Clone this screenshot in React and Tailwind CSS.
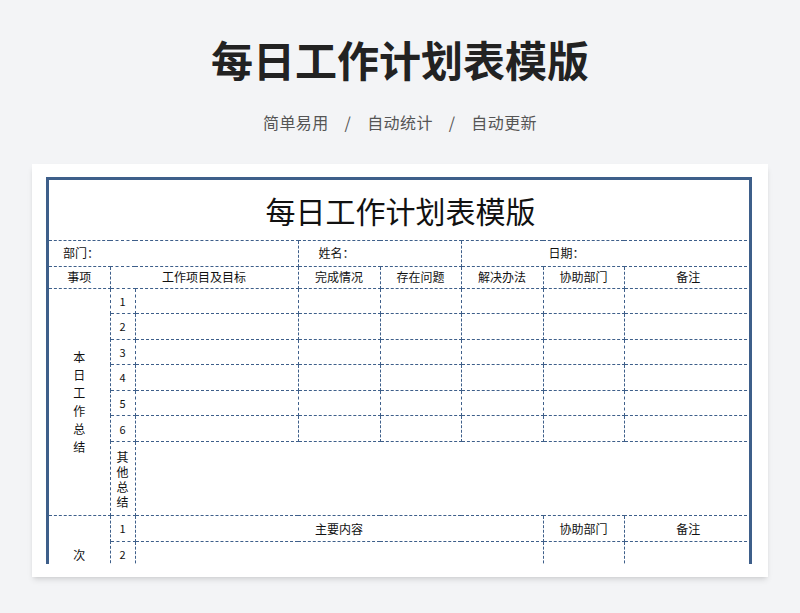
import React from 'react';

const font = { fontFamily: '"Noto Sans CJK SC", "Liberation Serif", serif' };
const b = 'border border-dashed border-[#3e5f8a]';

const App = () => {
  const rows = [1, 2, 3, 4, 5, 6];
  return (
    <div className="w-[800px] h-[613px] bg-[#f3f4f6] flex flex-col items-center overflow-hidden" style={font}>
      <h1 className="mt-[30px] text-[42px] leading-[58px] font-bold text-[#222]">每日工作计划表模版</h1>
      <p className="mt-[22px] text-[16px] text-[#555] tracking-wide">简单易用&nbsp;&nbsp;&nbsp;&nbsp;/&nbsp;&nbsp;&nbsp;&nbsp;自动统计&nbsp;&nbsp;&nbsp;&nbsp;/&nbsp;&nbsp;&nbsp;&nbsp;自动更新</p>
      <div className="mt-[30px] w-[736px] h-[413px] bg-white shadow-md pt-[13px] pl-[14px] pr-[16px] pb-[13px]">
        <div className="h-full overflow-hidden border-x-[3px] border-t-[3px] border-[#3e5f8a]">
          <table className="border-collapse table-fixed text-[12px] text-[#111] w-[703px]">
            <colgroup>
              <col className="w-[61px]" /><col className="w-[25px]" /><col className="w-[163px]" /><col className="w-[82px]" />
              <col className="w-[81px]" /><col className="w-[82px]" /><col className="w-[81px]" /><col className="w-[128px]" />
            </colgroup>
            <tbody>
              <tr className="h-[60px]">
                <td colSpan={8} className="border-b border-dashed border-[#3e5f8a] text-center text-[30px] pt-[2px]">每日工作计划表模版</td>
              </tr>
              <tr className="h-[26px]">
                <td colSpan={3} className={`${b} border-l-0 pl-[14px]`}>部门：</td>
                <td colSpan={2} className={`${b} pl-[20px]`}>姓名：</td>
                <td colSpan={3} className={`${b} border-r-0 pl-[87px]`}>日期：</td>
              </tr>
              <tr className="h-[22px] text-center">
                <td className={`${b} border-l-0`}>事项</td>
                <td colSpan={2} className={b}>工作项目及目标</td>
                <td className={b}>完成情况</td>
                <td className={b}>存在问题</td>
                <td className={b}>解决办法</td>
                <td className={b}>协助部门</td>
                <td className={`${b} border-r-0`}>备注</td>
              </tr>
              {rows.map((n) => (
                <tr key={n} className="h-[25.6px]">
                  {n === 1 && (
                    <td rowSpan={7} className={`${b} border-l-0 text-center leading-[18px]`}>
                      本<br />日<br />工<br />作<br />总<br />结
                    </td>
                  )}
                  <td className={`${b} text-center text-[11px]`}>{n}</td>
                  <td className={b}></td>
                  <td className={b}></td>
                  <td className={b}></td>
                  <td className={b}></td>
                  <td className={b}></td>
                  <td className={`${b} border-r-0`}></td>
                </tr>
              ))}
              <tr className="h-[74px]">
                <td className={`${b} text-center leading-[15px] text-[12px] py-[2px]`}>
                  <div className="flex flex-col items-center">
                    <span>其</span><span>他</span><span>总</span><span>结</span>
                  </div>
                </td>
                <td colSpan={6} className={`${b} border-r-0`}></td>
              </tr>
              <tr className="h-[26px] text-center">
                <td rowSpan={4} className={`${b} border-l-0 align-top pt-[30px]`}>次</td>
                <td className={`${b} text-[11px]`}>1</td>
                <td colSpan={4} className={b}>主要内容</td>
                <td className={b}>协助部门</td>
                <td className={`${b} border-r-0`}>备注</td>
              </tr>
              {[2, 3, 4].map((n) => (
                <tr key={n} className="h-[26px] text-center">
                  <td className={`${b} text-[11px]`}>{n}</td>
                  <td colSpan={4} className={b}></td>
                  <td className={b}></td>
                  <td className={`${b} border-r-0`}></td>
                </tr>
              ))}
            </tbody>
          </table>
        </div>
      </div>
    </div>
  );
};

export default App;
